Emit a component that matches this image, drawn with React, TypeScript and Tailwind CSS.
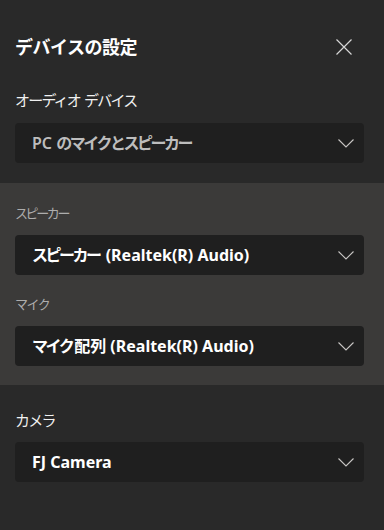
import React from 'react';

// kana runs get squeezed a bit so the widths follow the reference
function Text({ value, cjk }: { value: string; cjk: string }) {
  const parts = value.split(/([\u3040-\u30ff]+)/).filter(Boolean);
  return (
    <>
      {parts.map((p, i) =>
        /[\u3040-\u30ff]/.test(p) ? (
          <span key={i} className={cjk}>
            {p}
          </span>
        ) : (
          <span key={i}>{p}</span>
        ),
      )}
    </>
  );
}

function Chevron() {
  return (
    <svg width="16" height="9" viewBox="0 0 16 9" fill="none" className="shrink-0">
      <path d="M0.5 0.5L8 8L15.5 0.5" stroke="#c8c6c4" strokeWidth="1.1" />
    </svg>
  );
}

function Select({ value, dim = false }: { value: string; dim?: boolean }) {
  return (
    <div className="flex h-[40px] items-center justify-between rounded-[4px] bg-[#1f1f1f] pl-[17px] pr-[10px]">
      <span
        className={`whitespace-nowrap text-[16px] leading-[20px] ${dim ? 'font-semibold text-[#bdbdbd]' : 'font-bold text-white'}`}
      >
        <Text value={value} cjk="mr-[2px] tracking-[-2.5px]" />
      </span>
      <Chevron />
    </div>
  );
}

export default function App() {
  return (
    <div
      className="h-[530px] w-[384px] overflow-hidden bg-[#292929] pt-[36px]"
      style={{ fontFamily: '"Noto Sans", "Noto Sans CJK JP", sans-serif' }}
    >
      <div className="pl-[15px] pr-[20px]">
        <div className="flex h-[22px] items-center justify-between">
          <h1 className="text-[18px] font-bold leading-[22px] tracking-[-0.5px] text-white">デバイスの設定</h1>
          <button className="mr-[12px] flex h-[16px] w-[16px] items-center justify-center">
            <svg width="16" height="16" viewBox="0 0 16 16" fill="none">
              <path d="M0.5 0.5L15.5 15.5M15.5 0.5L0.5 15.5" stroke="#d6d6d6" strokeWidth="1.2" />
            </svg>
          </button>
        </div>

        <div className="mt-[32px] text-[15px] leading-[20px] tracking-[-1.8px] text-[#f0f0f0] [word-spacing:2px]">
          オーディオ デバイス
        </div>
        <div className="mt-[13px]">
          <Select value="PC のマイクとスピーカー" dim />
        </div>
      </div>

      <div className="mt-[20px] bg-[#3b3a39] pb-[19px] pl-[15px] pr-[20px] pt-[21px]">
        <div className="text-[13px] leading-[18px] tracking-[-2.4px] text-[#adadad]">スピーカー</div>
        <div className="mt-[13px]">
          <Select value="スピーカー (Realtek(R) Audio)" />
        </div>
        <div className="mt-[20px] text-[13px] leading-[18px] tracking-[-1.5px] text-[#adadad]">マイク</div>
        <div className="mt-[13px]">
          <Select value="マイク配列 (Realtek(R) Audio)" />
        </div>
      </div>

      <div className="pl-[15px] pr-[20px]">
        <div className="mt-[25px] text-[15px] leading-[20px] tracking-[-1.8px] text-[#f0f0f0]">カメラ</div>
        <div className="mt-[12px]">
          <Select value="FJ Camera" />
        </div>
      </div>
    </div>
  );
}
